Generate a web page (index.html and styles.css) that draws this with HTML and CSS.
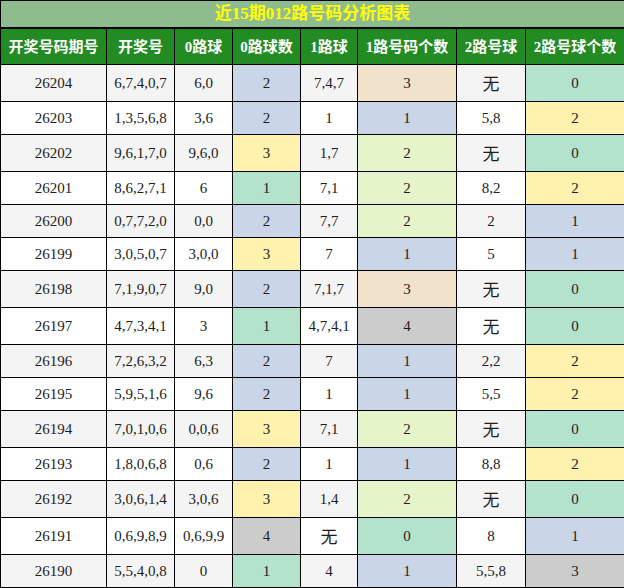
FILE: index.html
```html
<!DOCTYPE html>
<html lang="zh">
<head>
<meta charset="utf-8">
<title>近15期012路号码分析图表</title>
<link rel="stylesheet" href="styles.css">
</head>
<body>
<table class="chart">
  <colgroup>
    <col class="c1"><col class="c2"><col class="c3"><col class="c4">
    <col class="c5"><col class="c6"><col class="c7"><col class="c8">
  </colgroup>
  <thead>
    <tr class="title-row"><th colspan="8">近15期012路号码分析图表</th></tr>
    <tr class="head-row">
      <th>开奖号码期号</th><th>开奖号</th><th>0路球</th><th>0路球数</th>
      <th>1路球</th><th>1路号码个数</th><th>2路号球</th><th>2路号球个数</th>
    </tr>
  </thead>
  <tbody>
    <tr class="alt tall"><td>26204</td><td>6,7,4,0,7</td><td>6,0</td><td class="blue">2</td><td>7,4,7</td><td class="beige">3</td><td class="none">无</td><td class="green">0</td></tr>
    <tr><td>26203</td><td>1,3,5,6,8</td><td>3,6</td><td class="blue">2</td><td>1</td><td class="blue">1</td><td>5,8</td><td class="yellow">2</td></tr>
    <tr class="alt tall"><td>26202</td><td>9,6,1,7,0</td><td>9,6,0</td><td class="yellow">3</td><td>1,7</td><td class="lime">2</td><td class="none">无</td><td class="green">0</td></tr>
    <tr><td>26201</td><td>8,6,2,7,1</td><td>6</td><td class="green">1</td><td>7,1</td><td class="lime">2</td><td>8,2</td><td class="yellow">2</td></tr>
    <tr class="alt"><td>26200</td><td>0,7,7,2,0</td><td>0,0</td><td class="blue">2</td><td>7,7</td><td class="lime">2</td><td>2</td><td class="blue">1</td></tr>
    <tr><td>26199</td><td>3,0,5,0,7</td><td>3,0,0</td><td class="yellow">3</td><td>7</td><td class="blue">1</td><td>5</td><td class="blue">1</td></tr>
    <tr class="alt tall"><td>26198</td><td>7,1,9,0,7</td><td>9,0</td><td class="blue">2</td><td>7,1,7</td><td class="beige">3</td><td class="none">无</td><td class="green">0</td></tr>
    <tr class="tall"><td>26197</td><td>4,7,3,4,1</td><td>3</td><td class="green">1</td><td>4,7,4,1</td><td class="gray">4</td><td class="none">无</td><td class="green">0</td></tr>
    <tr class="alt"><td>26196</td><td>7,2,6,3,2</td><td>6,3</td><td class="blue">2</td><td>7</td><td class="blue">1</td><td>2,2</td><td class="yellow">2</td></tr>
    <tr><td>26195</td><td>5,9,5,1,6</td><td>9,6</td><td class="blue">2</td><td>1</td><td class="blue">1</td><td>5,5</td><td class="yellow">2</td></tr>
    <tr class="alt tall"><td>26194</td><td>7,0,1,0,6</td><td>0,0,6</td><td class="yellow">3</td><td>7,1</td><td class="lime">2</td><td class="none">无</td><td class="green">0</td></tr>
    <tr><td>26193</td><td>1,8,0,6,8</td><td>0,6</td><td class="blue">2</td><td>1</td><td class="blue">1</td><td>8,8</td><td class="yellow">2</td></tr>
    <tr class="alt tall"><td>26192</td><td>3,0,6,1,4</td><td>3,0,6</td><td class="yellow">3</td><td>1,4</td><td class="lime">2</td><td class="none">无</td><td class="green">0</td></tr>
    <tr class="tall"><td>26191</td><td>0,6,9,8,9</td><td>0,6,9,9</td><td class="gray">4</td><td class="none">无</td><td class="green">0</td><td>8</td><td class="blue">1</td></tr>
    <tr class="alt"><td>26190</td><td>5,5,4,0,8</td><td>0</td><td class="green">1</td><td>4</td><td class="blue">1</td><td>5,5,8</td><td class="gray">3</td></tr>
  </tbody>
</table>
</body>
</html>
```
FILE: styles.css
```css
html, body {
  margin: 0;
  padding: 0;
  background: #ffffff;
}

.chart {
  width: 624px;
  table-layout: fixed;
  border-collapse: collapse;
  font-family: "Liberation Serif", "Noto Sans CJK SC", serif;
  color: #1e1e1e;
}

.c1 { width: 106px; }
.c2 { width: 68px; }
.c3 { width: 58px; }
.c4 { width: 68px; }
.c5 { width: 57px; }
.c6 { width: 99px; }
.c7 { width: 69px; }
.c8 { width: 99px; }

.chart th,
.chart td {
  border: 1px solid #000000;
  padding: 0;
  text-align: center;
  vertical-align: middle;
}

.title-row th {
  height: 26px;
  background: #8fbc8f;
  color: #ffff00;
  font-size: 17px;
  font-weight: bold;
  font-family: "Liberation Serif", "Noto Sans CJK SC", serif;
  border-bottom-width: 2px;
  line-height: 20px;
}

.head-row th {
  height: 35px;
  background: #228b22;
  color: #ffffff;
  font-size: 15px;
  font-weight: bold;
  font-family: "Liberation Serif", "Noto Sans CJK SC", serif;
  line-height: 20px;
}

.chart td {
  height: 32px;
  font-size: 15px;
  line-height: 18px;
  background: #ffffff;
}

.chart tr.tall td {
  height: 36px;
}

.chart tr.alt td {
  background: #f4f4f4;
}

.chart td.none {
  font-family: "Noto Sans CJK SC", sans-serif;
  font-size: 17px;
}

.chart tr td.blue { background: #cbd5e8; }
.chart tr td.green { background: #b3e2cd; }
.chart tr td.yellow { background: #fff2ae; }
.chart tr td.beige { background: #f1e2cc; }
.chart tr td.lime { background: #e6f5c9; }
.chart tr td.gray { background: #cccccc; }
```
